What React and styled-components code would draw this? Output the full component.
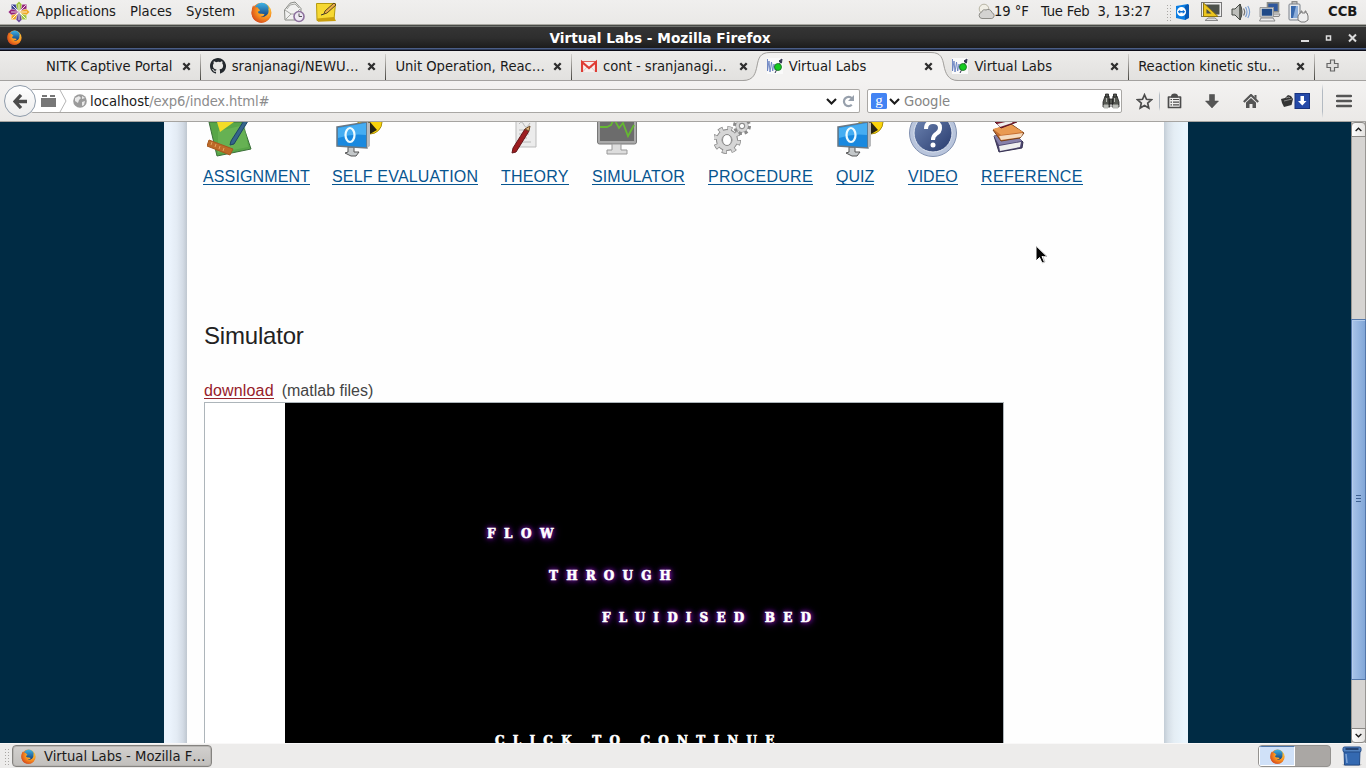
import React from 'react';
import styled, { createGlobalStyle, css } from 'styled-components';

const Global = createGlobalStyle`
  * { box-sizing: border-box; }
  body { margin: 0; overflow: hidden; background: #edeceb; }
  svg { display: block; flex: none; }
`;

const ui = css`
  font-family: "DejaVu Sans Condensed", "DejaVu Sans", sans-serif;
  font-stretch: condensed;
  font-size: 14.67px;
  line-height: 20px;
  color: #1a1a1a;
  white-space: pre;
`;

const Desktop = styled.div`
  ${ui}
  width: 1366px; height: 768px; overflow: hidden;
  display: flex; flex-direction: column;
`;

/* width-carrying slot used along the bars */
const Slot = styled.div`
  width: ${p => p.$w}px; height: 100%; flex: none;
  display: flex; align-items: center;
`;
const Label = styled.span`
  letter-spacing: ${p => p.$ls || 0}px;
  font-weight: ${p => (p.$bold ? 700 : 400)};
  color: ${p => p.$color || 'inherit'};
`;

/* ---------- desktop panel ---------- */
const Panel = styled.header`
  height: 24px; flex: none; display: flex; padding-left: 8px;
  background: linear-gradient(#f0efee, #eae9e7);
  ${Label} { position: relative; top: -1px; }
`;
const Spacer = styled.div`flex: 1;`;
const Grip = styled.div`
  width: 5px; height: 17px;
  background-image: radial-gradient(circle, #a9a7a4 0.7px, transparent 0.9px);
  background-size: 3px 3px;
`;

/* ---------- window title ---------- */
const TitleBar = styled.div`
  height: 27px; flex: none; display: flex; align-items: center; position: relative;
  border-top: 1px solid #a9a8a2; border-bottom: 1px solid #0c0c16;
  background: linear-gradient(#484b47 0 1px, #70726e 1px 2px, #343434 2px, #2e2e2e 13px, #1c1c1c 23px, #4a5d86 23px 24px, #2c3a58 24px);
  padding: 0 7px; justify-content: space-between;
`;
const WindowTitle = styled.span`
  color: #fff; font-family: "DejaVu Sans", sans-serif; font-stretch: normal; font-weight: 700; font-size: 13.7px;
`;
const WindowButtons = styled.div`display: flex; width: 62px;`;

/* ---------- tabs ---------- */
const TabStrip = styled.div`
  height: 30px; flex: none; display: flex; padding-left: 15px;
  background: linear-gradient(#edecea, #e2e1df); border-bottom: 1px solid #a3a19f;
`;
const Tab = styled.div`
  width: 185.7px; height: ${p => (p.$active ? 30 : 29)}px; flex: none; position: relative;
  display: flex; align-items: center; padding: 0 9px;
  &::after {
    content: ''; position: absolute; right: 0; top: 3px; bottom: 0;
    width: ${p => (p.$line ? 1 : 0)}px; background: linear-gradient(#d4d2cf, #45443f);
  }
`;
const TabIcon = styled.div`width: 16px; margin-right: 6px; position: relative;`;
const TabTitle = styled.span`flex: 1; position: relative; letter-spacing: -0.03px;`;
const ActiveShape = styled.svg`position: absolute; left: -15px; top: 0; overflow: visible;`;
const CloseIcon = styled.svg`position: relative; top: 0.5px; right: 1px;`;
const NewTab = styled.div`display: flex; align-items: center; padding-left: 11px;`;

/* ---------- navigation ---------- */
const NavBar = styled.div`
  height: 41px; flex: none; display: flex; align-items: center; position: relative;
  background: linear-gradient(#f3f2f1, #ebe9e7); border-bottom: 1px solid #a6a4a1;
  padding-left: 4px;
`;
const BackButton = styled.button`
  width: 32px; height: 32px; border-radius: 50%; padding: 0; flex: none; z-index: 1;
  border: 1px solid #8f9cab; background: linear-gradient(#fff, #ececec);
  display: flex; align-items: center; justify-content: center;
`;
const Field = styled.div`
  height: 24px; width: ${p => p.$w}px; flex: none; background: #fff;
  border: 1px solid #a9a7a4; border-radius: 2px; display: flex; align-items: center;
`;
const UrlField = styled(Field)`margin-left: -5px; border-left: 0; padding-left: 10px;`;
const SearchField = styled(Field)`margin-left: 7px; padding-left: 3px;`;
const Divider = styled.div`width: 1px; height: ${p => p.$h}px; background: linear-gradient(transparent, #b3bac2 20%, #b3bac2 80%, transparent);`;

/* ---------- page ---------- */
const Viewport = styled.main`height: 621px; flex: none; display: flex; background: #002b44;`;
const Edge = styled.div`
  width: ${p => p.$w}px; flex: none;
  background: ${p => (p.$right
    ? 'linear-gradient(90deg, #c3cdd6, #d6dfe7 4px, #e4edf4 10px, #eaf5fd 20px)'
    : 'linear-gradient(270deg, #bfc7d0, #d3dbe5 4px, #e3ebf4 10px, #ebf3fc 17px)')};
`;
const Sheet = styled.article`
  width: 977px; height: 621px; background: #fefefe; padding-left: 16px; overflow: hidden;
  font-family: "Liberation Sans", Arial, sans-serif; font-stretch: normal; font-size: 16px; line-height: 20px;
`;
const Menu = styled.nav`display: flex; height: 200px;`;
const MenuItem = styled.div`width: ${p => p.$w}px; flex: none;`;
const MenuArt = styled.div`height: 45px; padding-left: ${p => p.$x}px;`;
const Anchor = styled.a`
  display: block; width: fit-content; height: 18px; line-height: 20px;
  color: ${p => (p.$red ? '#962029' : '#075590')}; border-bottom: 1px solid currentColor;
  letter-spacing: ${p => p.$ls || 0}px;
`;
const Heading = styled.h2`
  margin: 0 0 0 1px; height: 59px; font-weight: 400; font-size: 24px; line-height: 28px; color: #222; letter-spacing: -0.2px;
`;
const Download = styled.p`margin: 0 0 0 1px; height: 21px; display: flex; gap: 8px; color: #444;`;
const Applet = styled.section`
  margin-left: 1px; width: 800px; height: 360px; border: 1px solid #adb5ba; background: #fff;
  display: flex; padding-left: 80px;
`;
const Stage = styled.div`
  flex: 1; background: #000; color: #fff; padding-top: 121px;
  font: 700 12px/20px "DejaVu Serif", serif;
`;
const StageLine = styled.div`
  height: ${p => p.$h}px; padding-left: ${p => p.$x}px; letter-spacing: ${p => p.$ls}px;
  -webkit-text-stroke: 0.6px #fff;
  text-shadow: ${p => (p.$glow ? '0 0 4px #7a18b0, 0 0 6px #7a18b0, 1px 1px 9px #6a10a0' : 'none')};
`;
const ScrollBar = styled.div`
  width: 15px; height: 621px; display: flex; flex-direction: column; background: #d6d4d2;
  border-left: 1px solid #999794; border-right: 1px solid #999794;
`;
const ScrollArrow = styled.div`
  height: 15px; margin: 0 -1px; border: 1px solid #8b8986; border-radius: ${p => (p.$down ? '0 0 4px 4px' : '4px 4px 0 0')};
  background: linear-gradient(90deg, #fff, #e4e2e0); display: flex; align-items: center; justify-content: center;
`;
const Thumb = styled.div`
  margin: 182px -1px auto; height: 361px; border: 1px solid #5578aa;
  box-shadow: inset 1px 1px #b5cdec; background: linear-gradient(90deg, #a9c4e9, #82a7d8);
  display: flex; align-items: center; justify-content: center; padding-bottom: 4px;
`;
const Cursor = styled.svg`position: absolute; left: 1035px; top: 245px;`;

/* ---------- taskbar ---------- */
const TaskBar = styled.footer`
  height: 25px; flex: none; display: flex; background: #edeceb; border-top: 1px solid #f9f8f8; padding-left: 4px;
`;
const TaskButton = styled.div`
  width: 200px; height: 22px; margin: 1px 0 0 3px; border: 1px solid #858380; border-radius: 4px;
  background: linear-gradient(#d2d0ce, #c1bfbc); display: flex; align-items: center; padding-left: 8px;
  box-shadow: inset 0 0 0 1px #b7b5b2;
`;
const Pager = styled.div`
  width: 73px; height: 22px; margin: 1px 11px 0 0; border: 1px solid #94928f; border-radius: 4px;
  background: #aaa7a4; display: flex; overflow: hidden;
`;
const Workspace = styled.div`
  width: 36px; background: #d0e1f8; border: 1px solid #fff; border-top: 1px solid #4c76ab;
  display: flex; align-items: center; justify-content: center;
`;

/* ---------- icons ---------- */
const Firefox = ({ size = 20 }) => (
  <svg width={size} height={size} viewBox="0 0 20 20">
    <defs>
      <radialGradient id="ffo" cx=".7" cy=".3" r=".9"><stop offset="0" stopColor="#ffe04a" /><stop offset=".5" stopColor="#f68b1e" /><stop offset="1" stopColor="#c8301b" /></radialGradient>
      <linearGradient id="ffb" x1="0" y1="0" x2="0" y2="1"><stop offset="0" stopColor="#3fb4e6" /><stop offset="1" stopColor="#123a78" /></linearGradient>
    </defs>
    <circle cx="10" cy="10.3" r="9.5" fill="url(#ffo)" />
    <circle cx="10.3" cy="7.6" r="6.9" fill="url(#ffb)" />
    <path d="M2 3.200Q2.300 5 4 4.800L6.600 5.300Q7 7 8.600 7.500 8 9 6.500 9 6.600 11 9 11.300 12 11 13 12 12 14 9 14.200 12 16.500 15.500 13.500 18 10.500 16 5.500 19.500 9 18.600 13 16 19.500 10 19.800 2.500 19.400.7 12.500 0 7 2 3.200Z" fill="url(#ffo)" />
  </svg>
);
const CentOS = () => (
  <svg width="22" height="22" viewBox="-11 -11 22 22">
    {[['#9fc53b', '#932279', 0], ['#efa724', '#9fc53b', 90], ['#6b4b98', '#efa724', 180], ['#932279', '#3b3f8f', 270]].map(([c, d, r]) => (
      <g key={r} transform={`rotate(${r})`}>
        <path d="M0-10.800 3.400-7.300V-3.500L0-.3-3.400-3.500V-7.300Z" fill={c} stroke="#fff" strokeWidth=".5" />
        <path d="M0-8V-1" stroke="#fff" strokeWidth=".8" />
      </g>
    ))}
    {['#932279', '#9fc53b', '#efa724', '#3b3f8f'].map((c, i) => (
      <g key={c} transform={`rotate(${i * 90})`}>
        <path d="M3-7.800H7.800V-3L5-2.500 1-1 2.500-5Z" fill={c} stroke="#fff" strokeWidth=".5" />
        <path d="M6.800-6.800 1-1" stroke="#fff" strokeWidth=".9" />
      </g>
    ))}
  </svg>
);
const Mail = () => (
  <svg width="22" height="22" viewBox="0 0 22 22">
    <path d="M1.500 9 7 2.200 12 1l6 6.500-.5 11.500H2Z" fill="#f1f1f0" stroke="#888a85" />
    <path d="m2 9 6 4h4l5-5M2 19l6-6M4 8l3-4 5-1 4 4" fill="none" stroke="#a5a6a2" />
    <circle cx="16" cy="15.500" r="5" fill="#eee9f3" stroke="#8d719e" strokeWidth="1.600" />
    <path d="M16 12.500v3h3" fill="none" stroke="#555" />
  </svg>
);
const Note = () => (
  <svg width="22" height="21" viewBox="0 0 22 21">
    <path d="M1.500 1.500h19L19 17.500l-17 1Z" fill="#f6d832" stroke="#b59a0d" />
    <path d="M2 16.500 19 15l2 4-18 .8Z" fill="#c99e0c" />
    <path d="m9 12 1-3L19 1l2 2-9 8Z" fill="#e9ad4b" stroke="#5d461d" /><path d="m6 13 3-1" stroke="#333" />
  </svg>
);
const Weather = () => (
  <svg width="19" height="18" viewBox="0 0 19 18">
    <circle cx="8" cy="6" r="4.800" fill="#f1efe6" stroke="#b8b5a5" />
    <path d="M6 15.500a3.200 3.200 0 0 1-.4-6.300A3.500 3.500 0 0 1 10 7a4 4 0 0 1 6 2.700 3 3 0 0 1-.2 5.800Z" fill="#d4d3d1" stroke="#8c8b86" />
  </svg>
);
const TeamViewer = () => (
  <svg width="15" height="16" viewBox="0 0 15 16">
    <path d="M1 2 13 0v14l-3 2-9-2Z" fill="#0a7de2" /><path d="M13 0l1 1v13l-4 2V2Z" fill="#0759b5" />
    <circle cx="6.500" cy="7.700" r="4.600" fill="#fff" /><path d="m2.700 7.700 2.500-2v1.300h2.600V5.700l2.500 2-2.500 2V8.400H5.200v1.300Z" fill="#0a6fd6" />
  </svg>
);
const Display = () => (
  <svg width="22" height="20" viewBox="0 0 22 20">
    <rect x=".5" y=".5" width="20" height="14" fill="#eee" stroke="#777" /><rect x="2.500" y="2.500" width="16" height="10" fill="#4c514b" />
    <path d="M2.500 1v13.500H17Z" fill="#ecc51d" stroke="#8e7611" /><path d="M5.500 7v4.500h5Z" fill="#4c514b" />
    <path d="M7 16h7l3 2.500H4Z" fill="#ddd" stroke="#888" />
  </svg>
);
const Speaker = () => (
  <svg width="20" height="18" viewBox="0 0 20 18">
    <path d="M1 6h3l5-5v16l-5-5H1Z" fill="#bdbeba" stroke="#444843" /><path d="M9 1q4 8 0 16Z" fill="#777b75" stroke="#444843" />
    <path d="M12.500 5.500q2.400 3.500 0 7" fill="none" stroke="#777" strokeWidth="1.300" /><path d="M14.500 4q3 5 0 10M16.800 3q3.600 6 0 12" fill="none" stroke="#7ba0d3" strokeWidth="1.200" />
  </svg>
);
const Network = () => (
  <svg width="22" height="20" viewBox="0 0 22 20">
    <rect x="8.500" y=".8" width="11" height="9" fill="#2e579d" stroke="#8b8d88" strokeWidth="1.600" /><path d="M10 12h11l-1 2.500h-8Z" fill="#ddd" stroke="#888" />
    <rect x="2" y="6" width="12" height="8.500" fill="#204a87" stroke="#deded9" strokeWidth="1.500" /><path d="M1 5.500h13.500V15H1Z" fill="none" stroke="#888" strokeWidth=".8" /><path d="M2 16h12l2 3H.5Z" fill="#eee" stroke="#888" />
  </svg>
);
const Battery = () => (
  <svg width="21" height="22" viewBox="0 0 21 22">
    <rect x="4" y=".7" width="5" height="3" fill="#ccc" stroke="#777" /><rect x="1" y="3" width="11" height="16" rx="1" fill="#e6e9ed" stroke="#7b818a" />
    <path d="M3 5h7v12H3Z" fill="#8cadd9" /><path d="M3 5h5L5 17H3Z" fill="#3969ad" />
    <path d="M10 19v-4l2-3h1V10h1v2h3v-2h1v2h1l1 3v4l-3 2h-4Z" fill="#eee" stroke="#777" />
  </svg>
);
const Github = () => (
  <svg width="16" height="16" viewBox="0 0 16 16"><path fill="#24292e" fillRule="evenodd" d="M8 0C3.58 0 0 3.58 0 8c0 3.54 2.29 6.53 5.47 7.59.4.07.55-.17.55-.38v-1.49c-2.01.37-2.53-.49-2.69-.94-.09-.23-.48-.94-.82-1.13-.28-.15-.68-.52-.01-.53.63-.01 1.08.58 1.23.82.72 1.21 1.87.87 2.33.66.07-.52.28-.87.51-1.07-1.78-.2-3.64-.89-3.64-3.95 0-.87.31-1.59.82-2.15-.08-.2-.36-1.02.08-2.12 0 0 .67-.21 2.2.82A7.4 7.4 0 0 1 8 3.86c.68 0 1.36.09 2 .27 1.53-1.04 2.2-.82 2.2-.82.44 1.1.16 1.92.08 2.12.51.56.82 1.27.82 2.15 0 3.07-1.87 3.75-3.65 3.95.29.25.54.73.54 1.48v2.2c0 .21.15.46.55.38A8 8 0 0 0 8 0Z" /></svg>
);
const Gmail = () => (
  <svg width="16" height="16" viewBox="0 0 16 16"><rect y="3" width="16" height="11" fill="#f7efee" /><path d="M0 3.500h16" stroke="#e2605a" /><path d="m2 13.500 4-4.500h4l4 4.500" fill="none" stroke="#d5c9c7" /><path d="M1 14V4l7 6 7-6v10" fill="none" stroke="#df3c34" strokeWidth="2.200" /></svg>
);
const LabIcon = () => (
  <svg width="16" height="16" viewBox="0 0 16 16"><rect width="16" height="16" fill="#fafafa" /><path d="M.5 1v12L2 3l1 11L4.500 4l1.200 9L7 6l1 6 3-3" fill="none" stroke="#6680c0" strokeWidth=".9" /><path d="m8 15 6-12M12 3l3-2-.5 4Z" stroke="#333452" fill="#333452" /><circle cx="11" cy="9" r="3.500" fill="#15cb20" stroke="#176c21" strokeWidth=".8" /></svg>
);
const Close = () => <CloseIcon width="9" height="9" viewBox="0 0 9 9"><path d="m1.300 1.300 6.400 6.400m0-6.400L1.300 7.700" stroke="#2e2e2e" strokeWidth="2.300" /></CloseIcon>;
const Chevron = ({ up, small }) => (
  <svg width={small ? 7 : 11} height={small ? 5 : 7} viewBox="0 0 11 7"><path d={up ? 'M1 6 5.500 1.500 10 6' : 'M1 1l4.500 4.500L10 1'} fill="none" stroke="#1b1b1b" strokeWidth="2.100" /></svg>
);
const Back = () => <svg width="15" height="15" viewBox="0 0 15 15"><path d="M8 1 2 7.500 8 14M2 7.500h12" fill="none" stroke="#4c4c4c" strokeWidth="3.300" /></svg>;
const Blocks = () => <svg width="15" height="14" viewBox="0 0 15 14"><path d="M0 4h15v9H0ZM1 1h5v2H1Zm8 0h5v2H9Z" fill="#777" /></svg>;
const Globe = () => <svg width="14" height="14" viewBox="0 0 14 14"><circle cx="7" cy="7" r="6.800" fill="#9b9b9b" /><path d="m2 4 4-2 2 2-2 2-1 3-3-2Zm7 4 3-1-1 4-2 1Zm0-6 3 2-3 1Z" fill="#e9e9e9" /></svg>;
const Reload = () => <svg width="13" height="13" viewBox="0 0 13 13"><path d="M9.800 9.800A4.600 4.600 0 1 1 10 3.500" fill="none" stroke="#97a0ac" strokeWidth="2.200" /><path d="M12 0v6H6Z" fill="#97a0ac" /></svg>;
const Binoculars = () => (
  <svg width="18" height="17" viewBox="0 0 18 17"><g fill="#555852" stroke="#222" strokeWidth=".8"><path d="M3 3h4l1 11H1V9Zm8 0h4l2 6v5h-7ZM7 6h4v5H7Z" /><path d="M3.500 1h3v3h-3Zm8 0h3v3h-3Z" /></g><path d="M2 12h4v3H2Zm9 0h5v3h-5ZM4.500 5v4M12.500 5v4" fill="#bec0bb" stroke="#b5b7b2" /></svg>
);
const Star = () => <svg width="17" height="17" viewBox="0 0 17 17"><path d="m8.500 1.800 2 4.500 5 .5-3.800 3.300 1.100 4.900-4.300-2.500L4.200 15l1.100-4.900L1.500 6.800l5-.5Z" fill="none" stroke="#4c4c4c" strokeWidth="1.700" /></svg>;
const Clip = () => <svg width="15" height="16" viewBox="0 0 15 16"><path d="M1.500 4h12v10.500h-12Z" fill="#f0efee" stroke="#4c4c4c" strokeWidth="1.700" strokeLinejoin="round" /><path d="M4 3.500Q4 .5 7.500.5T11 3.500V4.500H4Z" fill="#4c4c4c" /><path d="M3.500 6.500h1.500m1 0h6m-8.500 2.700h1.500m1 0h6m-8.500 2.700h1.500m1 0h6" stroke="#4c4c4c" strokeWidth="1.200" /></svg>;
const Down = () => <svg width="14" height="15" viewBox="0 0 14 15"><path d="M4.500.5h5V7H13.500L7 14 .5 7h4Z" fill="#555" stroke="#444" strokeWidth=".5" /></svg>;
const Home = () => <svg width="16" height="15" viewBox="0 0 16 15"><path d="m.8 8 7.200-7 7.200 7" fill="none" stroke="#555" strokeWidth="2.200" /><path d="M3 8.500 8 4l5 4.500V14H9.500v-4h-3v4H3Z" fill="#555" /><path d="M11.500 1h2v4l-2-2Z" fill="#555" /></svg>;
const Capture = () => (
  <svg width="29" height="16" viewBox="0 0 29 16"><path d="m0 6 4-1 3-3 3 1 2 3-1.500 6-7.500 2-2-4Z" fill="#343434" /><path d="m5 5 3-1 1 1M3 8l8-2" stroke="#888" fill="none" /><rect x="14" y=".5" width="14.500" height="15" fill="#2449a8" stroke="#17327e" /><path d="M19.500 3h3.500v5h2.500l-4.200 4.500L17 8h2.500Z" fill="#fff" /></svg>
);
const Burger = () => <svg width="16" height="14" viewBox="0 0 16 14"><path d="M1 2h14M1 7h14M1 12h14" stroke="#555" strokeWidth="2.500" strokeLinecap="round" /></svg>;
const Plus = () => <svg width="13" height="13" viewBox="0 0 13 13"><path d="M4.500 1h4v3.500H12v4H8.500V12h-4V8.500H1v-4h3.500Z" fill="#e0dfdd" stroke="#666" strokeWidth="1.200" /></svg>;
const Bin = () => (
  <svg width="21" height="20" viewBox="0 0 21 20"><path d="M0 18h20l-2 2H2Z" fill="#aaa" opacity=".6" /><path d="M2 4h16l-.5 15H2.500Z" fill="#3469b1" stroke="#204a87" /><rect x="1" y="1" width="18" height="5" rx="1.500" fill="#5282c0" stroke="#204a87" /><path d="M3.500 3h13" stroke="#18345f" strokeWidth="1.600" /><path d="m4 8 1 9" stroke="#7fa5d8" strokeWidth="1.500" /></svg>
);

/* menu artwork, upper part scrolled out of view */
const art = {
  assignment: (
    <svg width="46" height="36" viewBox="0 0 46 36"><path d="M2 0h33l9 27-34 7Z" fill="#58a648" stroke="#3b6f39" /><path d="m11 9 27-6 3 22-30 6Z" fill="#82c769" opacity=".35" /><path d="M10 0h17L13 10Z" fill="#f3dc28" /><path d="m38-3 3 2-14 23-4 1 1-4Z" fill="#35648b" stroke="#1c4464" /><path d="m2 18 24 9-3 6-23-9Z" fill="#bd6a28" stroke="#a6571d" /><path d="m5 20-1 3m5-1-1 3m5-1-1 3m5-1-1 3" stroke="#e4a35e" /></svg>
  ),
  monitor: (
    <svg width="50" height="36" viewBox="0 0 50 36"><circle cx="34" cy="0" r="12" fill="#fbd40c" stroke="#a98f0b" /><path d="m34 0-7 11V-5ZM34 0v12l7-4ZM34 0v-9h9Z" fill="#262314" /><path d="M12 25h6v5h5l-3 4h-5l-6-3 3-1Z" fill="#c4c8ca" stroke="#555" /><path d="m1 5 30-5v26L1 24Z" fill="#1989df" stroke="#6b7883" strokeWidth="1.500" /><path d="m2 6 28-5v12Q16 11 2 16Z" fill="#45adf2" /><path d="m31 0 3 1v23l-3 2Z" fill="#b8babc" /><ellipse cx="14" cy="13" rx="4.500" ry="7" fill="none" stroke="#eefbff" strokeWidth="2.200" /></svg>
  ),
  theory: (
    <svg width="36" height="36" viewBox="0 0 36 36"><path d="M10-2h20v27H10Z" fill="#ececec" stroke="#bbb" /><path d="M13 2q3-4 5 1t6-2M13 8h10M13 12h10M13 16h8M13 20h12" stroke="#b8b8b8" fill="none" /><path d="m19 7 4 2L10 30l-4 1 1-5Z" fill="#9d1d20" stroke="#64171a" /><path d="m19 7 4 2 1-5Z" fill="#e4b57b" stroke="#6c4a28" /></svg>
  ),
  simulator: (
    <svg width="42" height="36" viewBox="0 0 42 36"><rect x="1.500" y="-8" width="39" height="30" rx="2" fill="#aaa" stroke="#777" /><rect x="4" y="-8" width="34" height="27" fill="#6c6c6c" /><path d="M4 5h7l4-2 3-6 5 9 4-5 5 13 6-11" fill="none" stroke="#65b832" strokeWidth="1.800" /><path d="M16 22h9v6h6v4H11v-4h5Z" fill="#ddd" stroke="#999" /></svg>
  ),
  gears: (
    <svg width="38" height="36" viewBox="0 0 38 36"><g fill="none" stroke="#8a8a8a"><circle cx="13" cy="18" r="11" strokeWidth="6" strokeDasharray="4.600 4.039" /><circle cx="28" cy="4" r="7" strokeWidth="4" strokeDasharray="3 2.498" /><circle cx="13" cy="18" r="8" strokeWidth="6" /><circle cx="28" cy="4" r="4.500" strokeWidth="4" /></g><g fill="none" stroke="#d6d6d6"><circle cx="13" cy="18" r="10.500" strokeWidth="5.500" strokeDasharray="3.200 5.047" strokeDashoffset="-.6" /><circle cx="13" cy="18" r="7.800" strokeWidth="4.600" /><circle cx="28" cy="4" r="4.600" strokeWidth="2.800" /></g><ellipse cx="13" cy="18" rx="4.500" ry="5.500" fill="#fff" stroke="#888" /><circle cx="28" cy="4" r="2.600" fill="#fff" stroke="#888" /></svg>
  ),
  help: (
    <svg width="50" height="36" viewBox="0 0 50 36"><defs><linearGradient id="hlp" x2="1" y2="1"><stop stopColor="#7188b5" /><stop offset="1" stopColor="#273a6d" /></linearGradient></defs><circle cx="25" cy="11" r="23.500" fill="#b9c5dc" stroke="#8191b1" /><circle cx="25" cy="11" r="19" fill="url(#hlp)" stroke="#e0e7f2" /><path d="M18 7q0-7 7-7t7 6q0 4-4 6-3 2-3 6" fill="none" stroke="#fff" strokeWidth="4" /><circle cx="25" cy="23" r="2.500" fill="#fff" /></svg>
  ),
  books: (
    <svg width="38" height="36" viewBox="0 0 38 36"><path d="m5 14 21-2 8 8-1 6-23 4Z" fill="#4e4771" stroke="#353150" /><path d="m10 24 22-4-1 5-20 4Z" fill="#eee" /><path d="m5 14 20-4 8 9-23 4Z" fill="#8680aa" /><path d="m4 8 18-6 13 9-4 5-19 3Z" fill="#c36d31" stroke="#784019" /><path d="m10 14 24-3-2 4-20 3Z" fill="#f5dcc0" /><path d="m4 7 17-5 13 8-22 3Z" fill="#e99a51" /><path d="m3-3 20-4 5 7-16 6Z" fill="#7d1e2e" stroke="#581423" /><path d="m8 2 17-4-2 3-12 4Z" fill="#eee" /></svg>
  ),
};

const menu = [
  ['ASSIGNMENT', 129, 4, art.assignment, 0.12],
  ['SELF EVALUATION', 169, 4, art.monitor, 0.18],
  ['THEORY', 91, 5, art.theory, 0.2],
  ['SIMULATOR', 116, 4, art.simulator, 0.12],
  ['PROCEDURE', 128, 6, art.gears, 0.3],
  ['QUIZ', 72, 1, art.monitor, 0],
  ['VIDEO', 73, 0, art.help, 0],
  ['REFERENCE', 110, 8, art.books, 0.33],
];

const tabs = [
  { title: 'NITK Captive Portal', icon: <i />, line: true },
  { title: 'sranjanagi/NEWU…', icon: <Github />, line: true },
  { title: 'Unit Operation, Reac…', line: true },
  { title: 'cont - sranjanagi…', icon: <Gmail /> },
  { title: 'Virtual Labs', icon: <LabIcon />, active: true },
  { title: 'Virtual Labs', icon: <LabIcon />, line: true },
  { title: 'Reaction kinetic stu…', line: true },
];

export default function App() {
  return (
    <Desktop>
      <Global />
      <Panel>
        <Slot $w={28}><CentOS /></Slot>
        <Slot $w={94}><Label $ls={-0.06}>Applications</Label></Slot>
        <Slot $w={56}><Label>Places</Label></Slot>
        <Slot $w={65}><Label>System</Label></Slot>
        <Slot $w={32}><Firefox size={21} /></Slot>
        <Slot $w={32}><Mail /></Slot>
        <Slot $w={30}><Note /></Slot>
        <Spacer />
        <Slot $w={18}><Weather /></Slot>
        <Slot $w={47}><Label $ls={-0.1}>19 °F</Label></Slot>
        <Slot $w={125}><Label $ls={-0.17}>Tue Feb  3, 13:27</Label></Slot>
        <Slot $w={9}><Grip /></Slot>
        <Slot $w={26}><TeamViewer /></Slot>
        <Slot $w={30}><Display /></Slot>
        <Slot $w={28}><Speaker /></Slot>
        <Slot $w={29}><Network /></Slot>
        <Slot $w={40}><Battery /></Slot>
        <Slot $w={38}><Label $bold>CCB</Label></Slot>
      </Panel>

      <TitleBar>
        <Slot $w={16}><Firefox size={15} /></Slot>
        <WindowTitle>Virtual Labs - Mozilla Firefox</WindowTitle>
        <WindowButtons>
          <svg width="62" height="16" viewBox="0 0 62 16"><path d="M4 11h8" stroke="#ddd" strokeWidth="2" /><path d="M29.500 6h4v4h-4Z" fill="none" stroke="#ddd" strokeWidth="1.500" /><path d="m52 4.500 7 7m0-7-7 7" stroke="#ddd" strokeWidth="2" /></svg>
        </WindowButtons>
      </TitleBar>

      <TabStrip>
        {tabs.map((t, i) => (
          <Tab key={i} $active={t.active} $line={t.line}>
            {t.active && (
              <ActiveShape width="216" height="30" viewBox="0 0 216 30">
                <path d="M0 29.500C11 29.500 12.500 22 14 15 15.500 7 17 1.500 27 1.500H188C198 1.500 199.500 7 201 15 202.500 22 205 29.500 215 29.500V31H0Z" fill="#f3f2f1" />
                <path d="M0 29.500C11 29.500 12.500 22 14 15 15.500 7 17 1.500 27 1.500H188C198 1.500 199.500 7 201 15 202.500 22 205 29.500 215 29.500" fill="none" stroke="#a09e9b" />
              </ActiveShape>
            )}
            {t.icon && <TabIcon>{t.icon}</TabIcon>}
            <TabTitle>{t.title}</TabTitle>
            <Close />
          </Tab>
        ))}
        <NewTab><Plus /></NewTab>
      </TabStrip>

      <NavBar>
        <BackButton><Back /></BackButton>
        <UrlField $w={829}>
          <Slot $w={18}><Blocks /></Slot>
          <Slot $w={14}><svg width="8" height="22" viewBox="0 0 8 22"><path d="m1 0 6 11-6 11" fill="none" stroke="#b5b5b5" /></svg></Slot>
          <Slot $w={17}><Globe /></Slot>
          <Label>localhost</Label><Label $color="#8c8c8c" $ls={-0.14}>/exp6/index.html#</Label>
          <Spacer />
          <Slot $w={16}><Chevron /></Slot>
          <Slot $w={17}><Reload /></Slot>
        </UrlField>
        <SearchField $w={255}>
          <Slot $w={18}>
            <svg width="16" height="16" viewBox="0 0 16 16"><rect width="16" height="16" rx="1.500" fill="#4283f3" /><text x="8" y="11.500" fill="#fff" fontFamily="Liberation Serif" fontSize="15" textAnchor="middle">g</text></svg>
          </Slot>
          <Slot $w={15}><Chevron /></Slot>
          <Label $color="#858585" $ls={-0.08}>Google</Label>
          <Spacer />
          <Slot $w={19}><Binoculars /></Slot>
        </SearchField>
        <Slot $w={14} />
        <Slot $w={23}><Star /></Slot>
        <Slot $w={8}><Divider $h={20} /></Slot>
        <Slot $w={38}><Clip /></Slot>
        <Slot $w={38}><Down /></Slot>
        <Slot $w={38}><Home /></Slot>
        <Slot $w={41}><Capture /></Slot>
        <Slot $w={14}><Divider $h={34} /></Slot>
        <Slot $w={20}><Burger /></Slot>
      </NavBar>

      <Viewport>
        <Slot $w={164} />
        <Edge $w={23} />
        <Sheet>
          <Menu>
            {menu.map(([name, w, x, picture, ls]) => (
              <MenuItem key={name} $w={w}>
                <MenuArt $x={x}>{picture}</MenuArt>
                <Anchor $ls={ls}>{name}</Anchor>
              </MenuItem>
            ))}
          </Menu>
          <Heading>Simulator</Heading>
          <Download><Anchor $red $ls={0.15}>download</Anchor><span>(matlab files)</span></Download>
          <Applet>
            <Stage>
              <StageLine $glow $h={42} $x={202} $ls={8.500}>FLOW</StageLine>
              <StageLine $glow $h={42} $x={264} $ls={8.200}>THROUGH</StageLine>
              <StageLine $glow $h={123} $x={317} $ls={8.200}>FLUIDISED BED</StageLine>
              <StageLine $h={20} $x={210} $ls={8.250}>CLICK TO CONTINUE</StageLine>
            </Stage>
          </Applet>
        </Sheet>
        <Edge $w={24} $right />
        <Slot $w={163} />
        <ScrollBar>
          <ScrollArrow><Chevron up small /></ScrollArrow>
          <Thumb><svg width="5" height="8" viewBox="0 0 5 8"><path d="M0 1.500h5M0 4.500h5M0 7.500h5" stroke="#3f6292" /></svg></Thumb>
          <ScrollArrow $down><Chevron small /></ScrollArrow>
        </ScrollBar>
      </Viewport>

      <TaskBar>
        <Slot $w={5}><Grip /></Slot>
        <TaskButton>
          <Slot $w={23}><Firefox size={15} /></Slot>
          <Label>Virtual Labs - Mozilla F…</Label>
        </TaskButton>
        <Spacer />
        <Pager><Workspace><Firefox size={15} /></Workspace></Pager>
        <Slot $w={24}><Bin /></Slot>
      </TaskBar>

      <Cursor width="13" height="19" viewBox="0 0 13 19"><path d="M1 1v15l3.500-3.500 2.500 5.500 2.500-1-2.500-5.500h5Z" fill="#050505" stroke="#fff" strokeWidth="1" /><path d="M1 1l11 10.500H8l2 5.500-2.500 1" fill="none" stroke="#888" strokeWidth=".5" /></Cursor>
    </Desktop>
  );
}
